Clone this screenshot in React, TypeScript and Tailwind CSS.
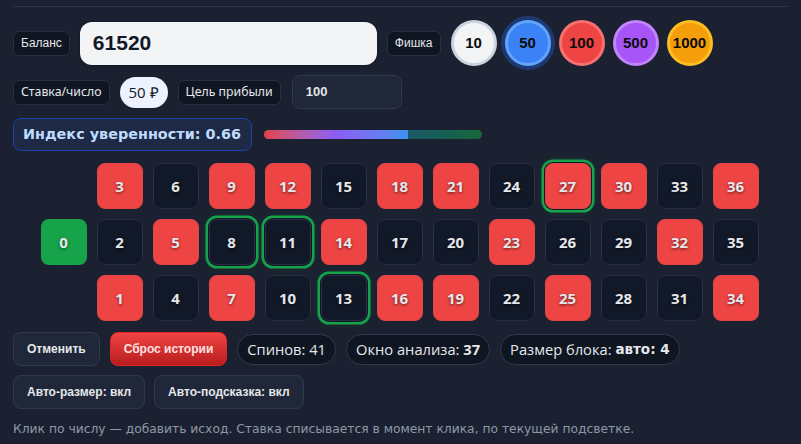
import React from "react";

const RED = new Set([1, 3, 5, 7, 9, 12, 14, 16, 18, 19, 21, 23, 25, 27, 30, 32, 34, 36]);
const HOT = new Set([8, 11, 13, 27]);

const rows = [
  [3, 6, 9, 12, 15, 18, 21, 24, 27, 30, 33, 36],
  [2, 5, 8, 11, 14, 17, 20, 23, 26, 29, 32, 35],
  [1, 4, 7, 10, 13, 16, 19, 22, 25, 28, 31, 34],
];

const chips = [
  { v: 10, cls: "bg-[#f3f4f6] border-[3px] border-[#cbd5e1]" },
  { v: 50, cls: "bg-[#3b82f6] border-[3px] border-[#60a5fa] shadow-[0_0_0_4px_rgba(37,99,235,0.35)]" },
  { v: 100, cls: "bg-[#ef4444] border-[3px] border-[#f87171]" },
  { v: 500, cls: "bg-[#a855f7] border-[3px] border-[#c084fc]" },
  { v: 1000, cls: "bg-[#f59e0b] border-[3px] border-[#fbbf24]" },
];

const Label = ({ children, arial }: { children: React.ReactNode; arial?: boolean }) => (
  <div
    className={
      "h-[25px] px-[7px] flex items-center rounded-md border border-[#263042] bg-[#0f1521] text-[#e5e7eb] whitespace-nowrap " +
      (arial ? "font-['Liberation_Sans',sans-serif] text-[12px]" : "font-['Noto_Sans',sans-serif] text-[12.3px]")
    }
  >
    {children}
  </div>
);

const Cell = ({ n }: { n: number }) => {
  const red = RED.has(n);
  const hot = HOT.has(n);
  return (
    <div
      className={
        "w-[46px] h-[46px] rounded-lg flex items-center justify-center text-[15px] font-bold text-[#e5e7eb] [text-shadow:0_1px_3px_rgba(0,0,0,0.6)] " +
        (red ? "bg-[#ef4444] border border-[#e0454a]" : "bg-[#111827] border border-[#263042]") +
        (hot
          ? " ring-[2.5px] ring-[#16a34a] ring-offset-1 ring-offset-[#101827] shadow-[0_0_8px_rgba(22,163,74,0.45)]"
          : "")
      }
    >
      {n}
    </div>
  );
};

const Pill = ({ children }: { children: React.ReactNode }) => (
  <div className="h-[31px] px-[9px] rounded-full bg-[#0f1521] border border-[#2e3a4e] flex items-center text-[14.7px] text-[#e5e7eb] whitespace-nowrap">
    {children}
  </div>
);

const Btn = ({ children }: { children: React.ReactNode }) => (
  <button className="h-[34px] px-[13px] rounded-lg bg-[#1f2738] border border-[#2e3a4e] text-[12px] font-bold text-[#e5e7eb] font-['Liberation_Sans',sans-serif]">
    {children}
  </button>
);

export default function App() {
  return (
    <div className="w-[801px] h-[444px] bg-[#1b2130] px-[13px] pt-[6px] font-['Open_Sans',sans-serif] overflow-hidden">
      <div className="border-t border-[#2c374b] pt-[13px]">
        {/* balance + chips */}
        <div className="flex items-center h-[46px]">
          <Label arial>Баланс</Label>
          <div className="ml-[10px] w-[297px] h-[43px] rounded-xl bg-[#f3f4f6] flex items-center px-[13px] text-[21px] font-bold text-[#111827] font-['Liberation_Sans',sans-serif] shadow-[0_1px_3px_rgba(0,0,0,0.3)]">
            61520
          </div>
          <div className="ml-[10px]">
            <Label arial>Фишка</Label>
          </div>
          <div className="ml-[10px] flex gap-[8px]">
            {chips.map((c) => (
              <div
                key={c.v}
                className={
                  "w-[46px] h-[46px] rounded-full flex items-center justify-center text-[15px] font-bold text-[#0b0b0b] font-['Liberation_Sans',sans-serif] " +
                  c.cls
                }
              >
                {c.v}
              </div>
            ))}
          </div>
        </div>

        {/* bet row */}
        <div className="flex items-center gap-[10px] mt-[9px] h-[34px]">
          <Label>Ставка/число</Label>
          <div className="h-[31px] px-[9px] rounded-full bg-[#eef2ff] flex items-center text-[15px] text-[#111827]">50 ₽</div>
          <Label>Цель прибыли</Label>
          <div className="ml-px w-[110px] h-[34px] rounded-lg bg-[#1f2738] border border-[#2e3a4e] flex items-center px-[13px] text-[13px] text-[#e5e7eb] font-['Liberation_Sans',sans-serif] font-semibold">
            100
          </div>
        </div>

        {/* confidence */}
        <div className="flex items-center mt-[9px]">
          <div className="w-[239px] h-[33px] rounded-lg bg-[#1e2a45] border border-[#1e40af] flex items-center px-[9px] text-[14.4px] font-bold text-[#bfdbfe] font-['DejaVu_Sans',sans-serif] whitespace-nowrap">
            Индекс уверенности: 0.66
          </div>
          <div className="ml-[12px] w-[218px] h-[9px] rounded-full overflow-hidden bg-linear-to-r from-[#1f3f6c] via-[#1f5078] to-[#18673a] flex">
            <div className="h-full bg-linear-to-r from-[#e23d4a] via-[#8b5cf6] to-[#3b8ff0]" style={{ width: "66%" }} />
          </div>
        </div>

        {/* table */}
        <div className="mt-[12px] flex justify-center gap-[10px] pr-[2px]">
          <div className="flex flex-col justify-center">
            <div className="w-[46px] h-[46px] rounded-lg bg-[#16a34a] flex items-center justify-center text-[15px] font-bold text-[#e5e7eb] [text-shadow:0_1px_3px_rgba(0,0,0,0.5)]">
              0
            </div>
          </div>
          <div className="flex flex-col gap-[10px]">
            {rows.map((r, i) => (
              <div key={i} className="flex gap-[10px]">
                {r.map((n) => (
                  <Cell key={n} n={n} />
                ))}
              </div>
            ))}
          </div>
        </div>

        {/* controls */}
        <div className="flex items-center mt-[11px] gap-[10px]">
          <Btn>Отменить</Btn>
          <button className="h-[34px] px-[13px] rounded-lg bg-linear-to-b from-[#ef4444] to-[#b91c1c] border border-[#dc2626] text-[12px] font-bold text-[#fee2e2] font-['Liberation_Sans',sans-serif]">
            Сброс истории
          </button>
          <Pill>Спинов: 41</Pill>
          <Pill>
            Окно анализа:&nbsp;<b>37</b>
          </Pill>
          <Pill>
            Размер блока:&nbsp;<b className="font-['DejaVu_Sans',sans-serif] text-[13.5px]">авто: 4</b>
          </Pill>
        </div>

        <div className="flex items-center mt-[9px] gap-[9px]">
          <Btn>Авто-размер: вкл</Btn>
          <Btn>Авто-подсказка: вкл</Btn>
        </div>

        <p className="mt-[11px] text-[12.3px] text-[#8e98a9] font-['DejaVu_Sans',sans-serif]">
          Клик по числу — добавить исход. Ставка списывается в момент клика, по текущей подсветке.
        </p>
      </div>
    </div>
  );
}
